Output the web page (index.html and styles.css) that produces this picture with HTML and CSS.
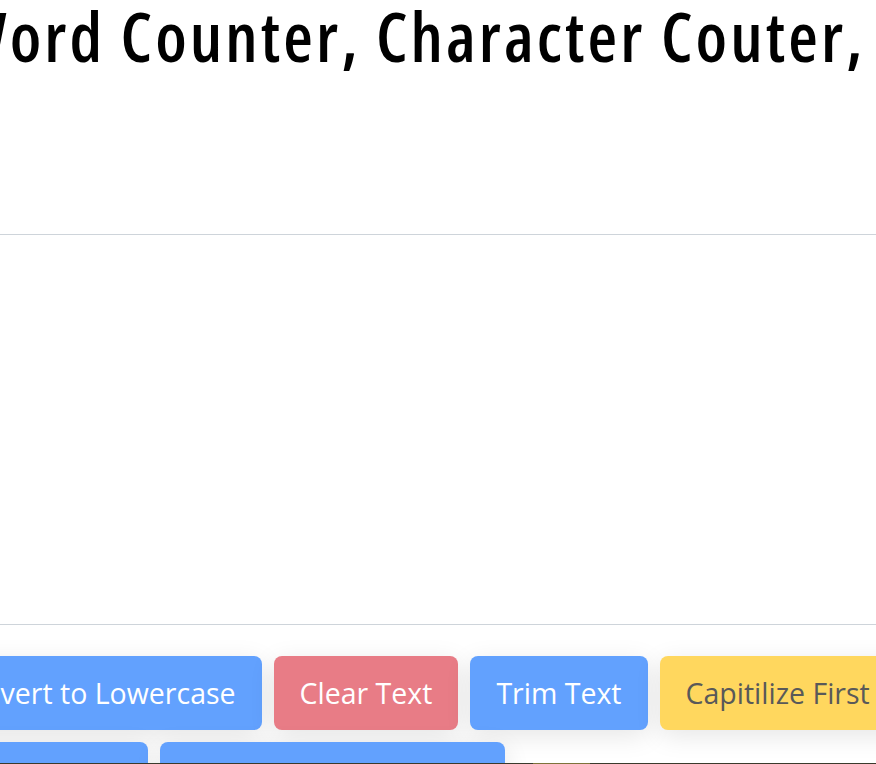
FILE: index.html
```html
<!DOCTYPE html>
<html lang="en">
<head>
<meta charset="utf-8">
<title>TextUtils</title>
<link rel="stylesheet" href="styles.css">
</head>
<body>
<div class="page">
  <h1 class="title">Word Counter, Character Couter, Remove extra spaces</h1>
  <div class="form">
    <textarea class="text-box" rows="8" aria-label="Text"></textarea>
  </div>
  <div class="actions">
    <button class="btn btn-primary" disabled>Convert to Lowercase</button>
    <button class="btn btn-danger" disabled>Clear Text</button>
    <button class="btn btn-primary" disabled>Trim Text</button>
    <button class="btn btn-warning" disabled>Capitilize First Letter</button>
    <button class="btn btn-primary" disabled>Count Words</button>
    <button class="btn btn-primary" disabled>Remove Extra Spacing</button>
  </div>
</div>
<div class="bottom-edge"><span class="edge-mark"></span></div>
</body>
</html>
```
FILE: styles.css
```css
html, body {
  margin: 0;
  padding: 0;
  background: #ffffff;
  overflow: hidden;
  height: 764px;
}
body {
  font-family: "Open Sans", "Noto Sans", sans-serif;
  color: #000;
  position: relative;
}
.page {
  margin-left: -70px;
  width: 1300px;
}
.title {
  margin: -5px 0 0 26px;
  font-size: 68px;
  font-weight: 600;
  font-stretch: 75%;
  letter-spacing: 3.1px;
  line-height: 82px;
  white-space: nowrap;
}
.form {
  margin-top: 157px;
}
.text-box {
  display: block;
  box-sizing: border-box;
  width: 100%;
  height: 391px;
  border: 1px solid #ced4da;
  border-radius: 8px;
  padding: 12px 23px;
  resize: none;
  background: #fff;
}
.actions {
  margin: 31px 0 0 -8px;
  display: flex;
  flex-wrap: wrap;
  gap: 12px;
  width: 1080px;
}
.btn {
  font-family: "Open Sans", "Noto Sans", sans-serif;
  font-size: 28.5px;
  line-height: 44px;
  padding: 15px 26px;
  border: 0;
  border-radius: 8px;
  color: #fff;
  box-shadow: 0 6px 26px rgba(0, 0, 0, 0.1);
  white-space: nowrap;
}
.btn-primary { background: #62a1fe; }
.btn-danger { background: #e87c86; }
.btn-warning { background: #ffd75e; color: #595959; }
.bottom-edge {
  position: absolute;
  left: 0;
  right: 0;
  top: 763px;
  height: 1px;
  background: #3a3a2c;
}
.edge-mark {
  position: absolute;
  left: 533px;
  width: 57px;
  height: 1px;
  background: #7d733a;
}
```
